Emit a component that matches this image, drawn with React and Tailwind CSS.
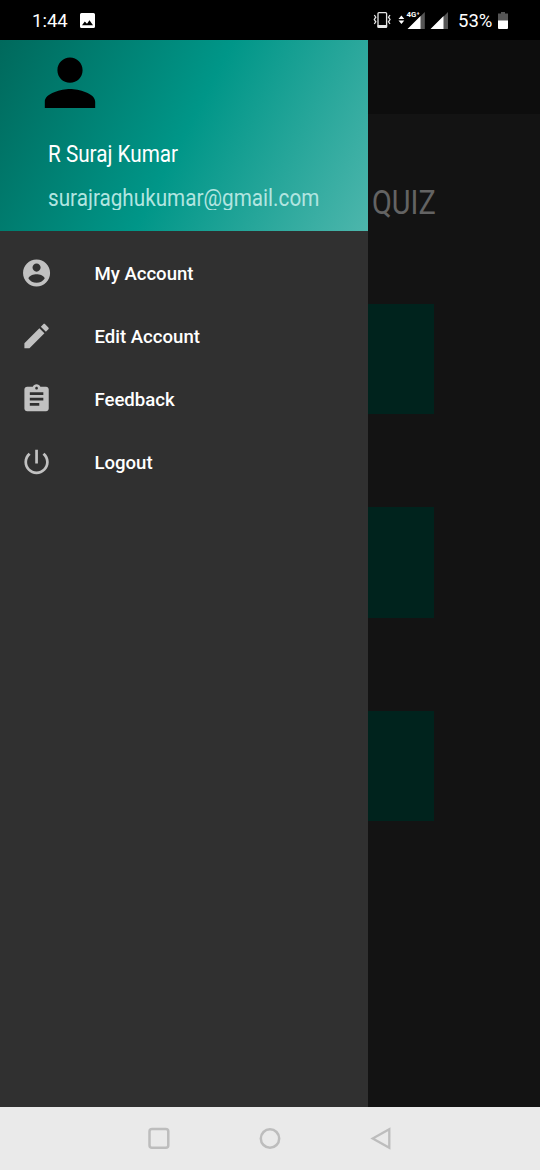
import React from "react";

const PERSON = "M12 12c2.21 0 4-1.79 4-4s-1.79-4-4-4-4 1.79-4 4 1.79 4 4 4zm0 2c-2.67 0-8 1.34-8 4v2h16v-2c0-2.66-5.33-4-8-4z";

const MENU = [
  {
    label: "My Account",
    path: "M12 2C6.48 2 2 6.48 2 12s4.48 10 10 10 10-4.480 10-10S17.520 2 12 2zm0 3c1.660 0 3 1.340 3 3s-1.340 3-3 3-3-1.340-3-3 1.340-3 3-3zm0 14.200c-2.500 0-4.710-1.280-6-3.220.030-1.990 4-3.080 6-3.080 1.990 0 5.970 1.090 6 3.080-1.290 1.940-3.500 3.220-6 3.220z",
  },
  {
    label: "Edit Account",
    path: "M3 17.250V21h3.750L17.810 9.940l-3.750-3.750L3 17.250zM20.710 7.040c.390-.390.390-1.020 0-1.410l-2.340-2.340c-.390-.390-1.020-.390-1.410 0l-1.830 1.830 3.750 3.750 1.830-1.830z",
  },
  {
    label: "Feedback",
    path: "M19 3h-4.180C14.400 1.840 13.300 1 12 1c-1.300 0-2.400.840-2.820 2H5c-1.100 0-2 .900-2 2v14c0 1.100.900 2 2 2h14c1.100 0 2-.900 2-2V5c0-1.100-.900-2-2-2zm-7 0c.550 0 1 .450 1 1s-.450 1-1 1-1-.450-1-1 .450-1 1-1zm2 14H7v-2h7v2zm3-4H7v-2h10v2zm0-4H7V7h10v2z",
  },
  {
    label: "Logout",
    path: "M13 3h-2v10h2V3zm4.830 2.170l-1.420 1.420C17.990 7.860 19 9.810 19 12c0 3.870-3.130 7-7 7s-7-3.130-7-7c0-2.190 1.010-4.140 2.580-5.420L6.170 5.170C4.230 6.820 3 9.260 3 12c0 4.970 4.030 9 9 9s9-4.030 9-9c0-2.740-1.230-5.180-3.170-6.830z",
  },
];

function StatusBar() {
  return (
    <header className="flex h-10 shrink-0 items-center bg-black pl-8 text-white">
      <span className="w-[48px] pt-[2px] text-[18.500px] leading-none">1:44</span>
      <svg className="h-[15px] w-[15px]" viewBox="0 0 15 15">
        <path fill="#fff" fillRule="evenodd" d="M1.500 0h12A1.500 1.500 0 0 1 15 1.500v12a1.500 1.500 0 0 1-1.500 1.500h-12A1.500 1.500 0 0 1 0 13.500v-12A1.500 1.500 0 0 1 1.500 0zM2 12.300h11L9.500 7.300 7 10.800 4.800 8.600z" />
      </svg>
      <div className="ml-auto flex items-center pr-[32px]">
        <svg className="h-10 w-[80px]" viewBox="370 0 80 40">
          <g fill="none" stroke="#e6e6e6" strokeWidth="1.300">
            <path d="M374.300 15l1.500 2.200-1.500 2.300 1.500 2.300-1.500 2.200M390 15l-1.500 2.200 1.500 2.300-1.500 2.300 1.500 2.200" />
            <rect x="378" y="12.600" width="8.600" height="14.800" rx="1" />
          </g>
          <path fill="#e6e6e6" d="M377.500 25h9.600v2.500h-9.600z" />
          <path fill="#fff" d="M398.500 19l2.900-3.500 2.900 3.500zM398.500 20.600l2.900 3.500 2.900-3.500z" />
          <path fill="#555" d="M424.800 12v17h-5V17zM448 12v17h-5V17z" />
          <path fill="#fff" d="M420.500 16v13h-13zM443.500 16v13h-13z" />
          <text x="406.600" y="17" fill="#fff" fontFamily="Roboto" fontSize="7.800" fontWeight="700">4G</text>
          <text x="416.800" y="15" fill="#fff" fontFamily="Roboto" fontSize="5" fontWeight="700">+</text>
        </svg>
        <span className="ml-2 w-[40px] pt-[2px] text-[18.500px] leading-none">53%</span>
        <svg className="h-[17px] w-[10px]" viewBox="0 0 10 17">
          <path fill="#555" d="M3 0h4v1.500h3V9H0V1.500h3z" />
          <path fill="#fff" d="M0 8.500h10V16a1 1 0 0 1-1 1H1a1 1 0 0 1-1-1z" />
        </svg>
      </div>
    </header>
  );
}

function Drawer() {
  return (
    <aside className="flex w-[367.6px] shrink-0 flex-col bg-[#303030]">
      <div className="flex h-[191px] flex-col bg-[linear-gradient(117.5deg,#00695c_0%,#009688_50%,#4db6ac_100%)] pt-[5px]">
        <svg className="ml-8 h-[76px] w-[76px] shrink-0" viewBox="-0.07 0 24.14 24.14">
          <path d={PERSON} />
        </svg>
        <div className="ml-12 mt-[18px] h-[30px] origin-left scale-x-[0.888] whitespace-nowrap text-[23.300px] leading-[30px] text-white">
          R Suraj Kumar
        </div>
        <div className="ml-12 mt-[14px] h-[27px] origin-left scale-x-[0.888] overflow-hidden whitespace-nowrap text-[23.300px] leading-[30px] text-[#b2e5e0]">
          surajraghukumar@gmail.com
        </div>
      </div>
      <nav className="flex flex-col pt-[11px]">
        {MENU.map((item) => (
          <a key={item.label} className="flex h-[63px] items-center pl-[20px]">
            <svg className="h-[33px] w-[33px]" viewBox="-0.25 0.15 24.4 24.4">
              <path fill="#c1c1c1" d={item.path} />
            </svg>
            <span className="ml-[41.400px] pt-[2px] text-[18.600px] font-medium leading-none text-white">{item.label}</span>
          </a>
        ))}
      </nav>
    </aside>
  );
}

function Page() {
  return (
    <main className="flex flex-1 flex-col bg-[#131313]">
      <div className="h-[74px] bg-[#0d0d0d]" />
      <h1 className="ml-[4px] mt-[68px] h-[42px] origin-left scale-x-[0.875] text-[33px] leading-[42px] text-[#636363]">QUIZ</h1>
      <div className="mt-[80px] flex w-[66.500px] flex-col gap-[93px]">
        <div className="h-[110.400px] bg-[#00231d]" />
        <div className="h-[110.400px] bg-[#00231d]" />
        <div className="h-[110.400px] bg-[#00231d]" />
      </div>
    </main>
  );
}

function NavBar() {
  return (
    <footer className="flex h-[63px] shrink-0 items-center justify-center gap-[87px] bg-[#eaeaea]">
      <svg className="h-6 w-6" viewBox="0 0.5 24 24" fill="none" stroke="#bdbdbd" strokeWidth="2.500">
        <rect x="2.500" y="2.500" width="18.800" height="18.800" rx="2.500" />
      </svg>
      <svg className="h-6 w-6" viewBox="0 0.5 24 24" fill="none" stroke="#bdbdbd" strokeWidth="2.500">
        <circle cx="12" cy="12" r="9.200" />
      </svg>
      <svg className="h-6 w-6" viewBox="-0.5 0.5 24 24" fill="none" stroke="#bdbdbd" strokeWidth="2.300">
        <path d="M3.200 12l16.600-9.200v18.400z" />
      </svg>
    </footer>
  );
}

export default function App() {
  return (
    <div className="flex h-[1170px] w-[540px] flex-col overflow-hidden font-['Roboto',sans-serif]">
      <StatusBar />
      <div className="flex flex-1">
        <Drawer />
        <Page />
      </div>
      <NavBar />
    </div>
  );
}
